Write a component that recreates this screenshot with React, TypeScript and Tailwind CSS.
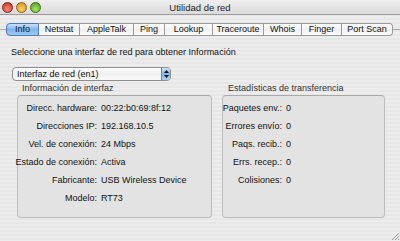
import React from "react";

const tabs: [string, number][] = [
  ["Info", 33],
  ["Netstat", 41],
  ["AppleTalk", 54],
  ["Ping", 31],
  ["Lookup", 48],
  ["Traceroute", 51],
  ["Whois", 38],
  ["Finger", 40],
  ["Port Scan", 51],
];

const info: [string, string][] = [
  ["Direcc. hardware:", "00:22:b0:69:8f:12"],
  ["Direcciones IP:", "192.168.10.5"],
  ["Vel. de conexión:", "24 Mbps"],
  ["Estado de conexión:", "Activa"],
  ["Fabricante:", "USB Wireless Device"],
  ["Modelo:", "RT73"],
];

const stats: [string, string][] = [
  ["Paquetes env.:", "0"],
  ["Errores envío:", "0"],
  ["Paqs. recib.:", "0"],
  ["Errs. recep.:", "0"],
  ["Colisiones:", "0"],
];

function Light({ from, to, border }: { from: string; to: string; border: string }) {
  return (
    <span
      className="block w-[11px] h-[11px] rounded-full border"
      style={{ background: `radial-gradient(circle at 50% 70%, ${to}, ${from})`, borderColor: border }}
    />
  );
}

function Rows({ rows, labelW }: { rows: [string, string][]; labelW: number }) {
  return (
    <div className="pt-[3px]">
      {rows.map(([k, v]) => (
        <div key={k} className="flex h-[18px] items-center">
          <div className="flex justify-end whitespace-nowrap shrink-0" style={{ width: labelW }}>
            {k}
          </div>
          <div className="ml-[4px] whitespace-nowrap">{v}</div>
        </div>
      ))}
    </div>
  );
}

export default function App() {
  return (
    <div
      className="w-[400px] h-[241px] overflow-hidden relative text-[#111] text-[9px] leading-[11px] bg-[repeating-linear-gradient(180deg,#ededed_0px,#ededed_2px,#e7e7e7_2px,#e7e7e7_4px)]"
      style={{ fontFamily: '"Liberation Sans", Arial, sans-serif' }}
    >
      {/* title bar */}
      <div className="relative h-[15px] border-b border-[#9c9c9c] bg-[linear-gradient(180deg,#efefef,#dadada)] flex items-center">
        <div className="flex gap-[3px] pl-[2px]">
          <Light from="#c4281f" to="#ff8a7a" border="#8a1f18" />
          <Light from="#d18a12" to="#ffd36a" border="#94610e" />
          <Light from="#4c9a1e" to="#a8e06a" border="#3a6e16" />
        </div>
        <div className="absolute inset-0 flex items-center justify-center text-[9.5px] text-[#222]">
          Utilidad de red
        </div>
      </div>

      {/* tabs */}
      <div className="relative mt-[8px] h-[13px]">
        <div className="absolute left-0 right-0 top-[6px] h-px bg-[#a8a8a8]" />
        <div className="relative ml-[6px] flex h-[13px]">
          {tabs.map(([t, w], i) => {
            const sel = i === 0;
            const first = i === 0;
            const last = i === tabs.length - 1;
            return (
              <div
                key={t}
                style={{ width: w }}
                className={`flex items-center justify-center h-[13px] border-y ${
                  first ? "border-l rounded-l-[4px]" : ""
                } ${last ? "border-r rounded-r-[4px]" : "border-r"} ${
                  sel
                    ? "bg-[linear-gradient(180deg,#c9e2fb,#7fb5ec_50%,#9ccaf6)] border-[#4f7bb8] text-[#0b1a33]"
                    : "bg-[linear-gradient(180deg,#ffffff,#f1f1f1_50%,#fbfbfb)] border-[#9a9a9a]"
                }`}
              >
                {t}
              </div>
            );
          })}
        </div>
      </div>

      <div className="ml-[11px] mt-[11px]">Seleccione una interfaz de red para obtener Información</div>

      {/* popup */}
      <div className="ml-[12px] mt-[9px] w-[159px] h-[14px] flex rounded-[4px] border border-[#8e8e8e] overflow-hidden bg-[linear-gradient(180deg,#ffffff,#f0f0f0_50%,#fafafa)]">
        <div className="flex-1 pl-[4px] flex items-center">Interfaz de red (en1)</div>
        <div className="w-[9px] border-l border-[#5a84bd] bg-[linear-gradient(180deg,#cfe6fc,#7fb6ee_50%,#a6d0f8)] flex flex-col items-center justify-center gap-[2px]">
          <svg width="5" height="3" viewBox="0 0 5 3"><path d="M0 3L2.5 0L5 3Z" fill="#111" /></svg>
          <svg width="5" height="3" viewBox="0 0 5 3"><path d="M0 0L2.5 3L5 0Z" fill="#111" /></svg>
        </div>
      </div>

      {/* groups */}
      <div className="flex mt-[1px] ml-[17px] gap-[10px]">
        <div className="w-[195px]">
          <div className="pl-[5px] h-[13px] flex items-center text-[#333]">Información de interfaz</div>
          <div className="h-[123px] rounded-[4px] border border-[#bdbdbd] border-t-[#a9a9a9] bg-[#e3e3e3]">
            <Rows rows={info} labelW={79} />
          </div>
        </div>
        <div className="w-[163px]">
          <div className="pl-[6px] h-[13px] flex items-center text-[#333]">Estadísticas de transferencia</div>
          <div className="h-[123px] rounded-[4px] border border-[#bdbdbd] border-t-[#a9a9a9] bg-[#e3e3e3]">
            <Rows rows={stats} labelW={59} />
          </div>
        </div>
      </div>

      {/* resize grip */}
      <svg className="absolute right-0 bottom-0" width="10" height="10" viewBox="0 0 10 10">
        <path d="M9 2L2 9M9 5L5 9M9 8L8 9" stroke="#9a9a9a" strokeWidth="1" />
      </svg>
    </div>
  );
}
